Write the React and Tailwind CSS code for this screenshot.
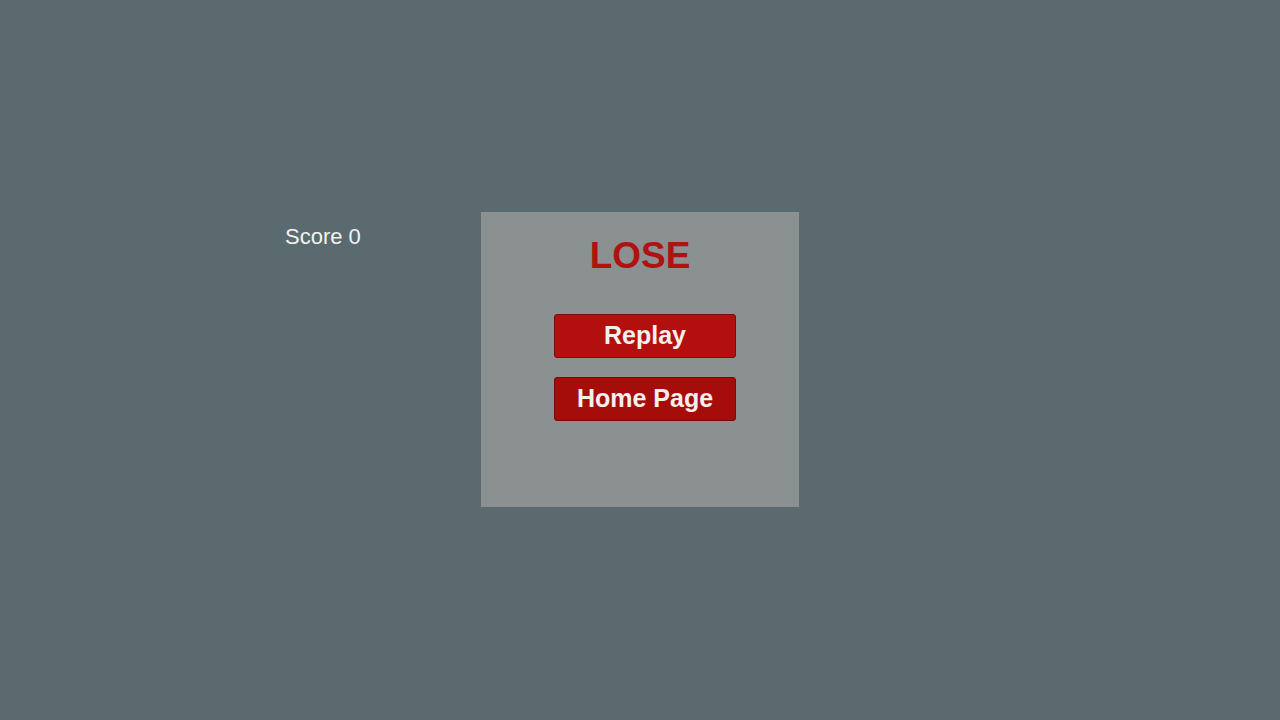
export default function App() {
  return (
    <div
      className="flex h-screen w-full items-start bg-[#5a6a6e] pl-[285px] pt-[212px]"
      style={{ fontFamily: '"Liberation Sans", Arial, sans-serif' }}
    >
      {/* Score */}
      <div className="mt-[12px] w-[76px] text-[22px] leading-[25px] text-[#f2f2f2]">
        Score 0
      </div>

      {/* Result panel */}
      <div className="ml-[120px] flex h-[295px] w-[318px] flex-col bg-[#8b9090] pt-[25px]">
        <h1 className="text-center text-[37px] font-bold leading-none text-[#b01212]">
          LOSE
        </h1>
        <div className="ml-[73px] mt-[40px] flex flex-col gap-[19px]">
          <button className="flex h-[44px] w-[182px] items-center justify-center rounded-[3px] border border-[#7e0a0a] bg-[#b30f0f] text-[25px] font-bold text-[#f4f0ee]">
            Replay
          </button>
          <button className="flex h-[44px] w-[182px] items-center justify-center rounded-[3px] border border-[#7a0808] bg-[#a50d0b] text-[25px] font-bold text-[#f4f0ee]">
            Home Page
          </button>
        </div>
      </div>
    </div>
  );
}
